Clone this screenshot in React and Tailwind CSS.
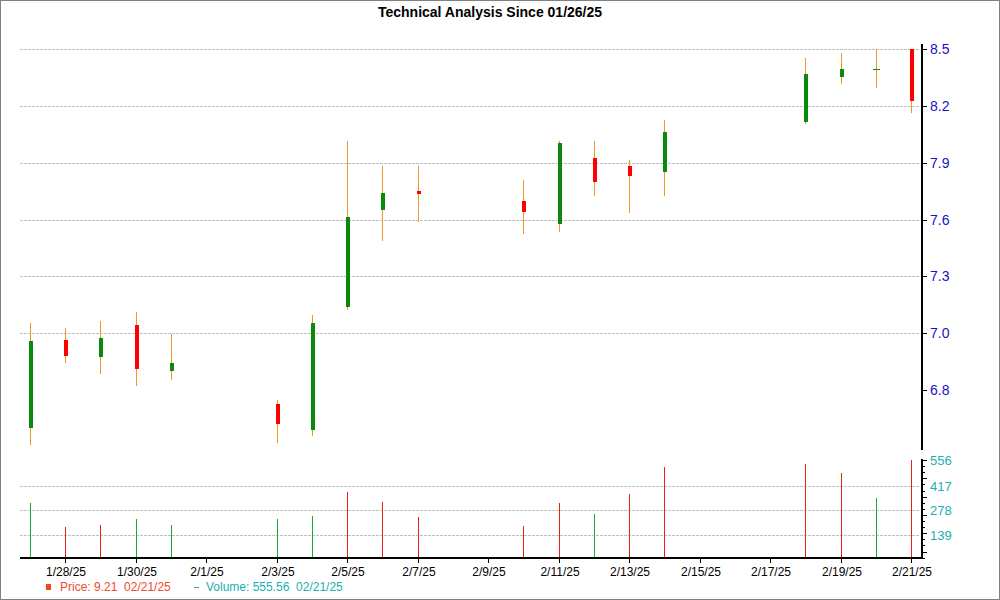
const C=[[30,323,445,341,428,'g'],[65,328,363,340,356,'r'],[100,321,374,338,357,'g'],[136,312,386,325,369,'r'],[171,334,380,363,371,'g'],[277,400,443,404,424,'r'],[312,315,436,323,430,'g'],[347,141,310,217,307,'g'],[382,166,241,193,210,'g'],[418,166,222,191,194,'r'],[523,180,234,201,212,'r'],[559,141,232,143,224,'g'],[594,141,196,158,182,'r'],[629,160,213,166,176,'r'],[664,120,196,132,172,'g'],[805,58,124,74,122,'g'],[841,53,84,69,77,'g'],[876,49,88,69,69,'d'],[911,49,113,49,101,'r']];
const V=[[30,503,'g'],[65,527,'r'],[100,525,'r'],[136,519,'g'],[171,525,'g'],[277,519,'g'],[312,516,'g'],[347,492,'r'],[382,502,'r'],[418,517,'r'],[523,526,'r'],[559,503,'r'],[594,514,'g'],[629,494,'r'],[664,467,'r'],[805,464,'r'],[841,473,'r'],[876,498,'g'],[911,460,'r']];
const D=['1/28/25','1/30/25','2/1/25','2/3/25','2/5/25','2/7/25','2/9/25','2/11/25','2/13/25','2/15/25','2/17/25','2/19/25','2/21/25'];
const PL=[[49,'8.5'],[106,'8.2'],[163,'7.9'],[220,'7.6'],[276,'7.3'],[333,'7.0'],[390,'6.8']];
const VL=[[460,'556'],[486,'417'],[510,'278'],[535,'139']];
export default function App(){
return(<div className="relative w-[1000px] h-[600px] bg-white border border-[#808080] overflow-hidden" style={{fontFamily:'"Liberation Sans",Arial,sans-serif'}}>
<div className="absolute left-0 right-[20px] top-[1px] text-center text-[14px] font-bold text-black">Technical Analysis Since 01/26/25</div>
<svg className="absolute left-[-1px] top-[-1px]" width="1000" height="600" fontFamily='"Liberation Sans",Arial,sans-serif' shapeRendering="crispEdges">
{PL.slice(0,6).map(([y])=><line key={y} x1="20" x2="919" y1={y+0.5} y2={y+0.5} stroke="#c0c0c0" strokeDasharray="3 1" strokeWidth="1"/>)}
{VL.slice(1).map(([y])=><line key={y} x1="20" x2="919" y1={y+0.5} y2={y+0.5} stroke="#c0c0c0" strokeDasharray="3 1" strokeWidth="1"/>)}
{C.map(([x,h,l,o,c,t])=><g key={x}>
<line x1={x+0.5} x2={x+0.5} y1={h} y2={l} stroke="#f0962a" strokeWidth="1"/>
{t==='d'?<line x1={x-3} x2={x+4} y1={o+0.5} y2={o+0.5} stroke="#0a8a0a"/>:
<rect x={x-1} y={o} width="4" height={Math.max(c-o,3)} fill={t==='g'?'#0a8a0a':'#ff0000'}/>}
</g>)}
{V.map(([x,y,t])=><line key={x} x1={x+0.5} x2={x+0.5} y1={y} y2="557" stroke={t==='g'?'#19a83a':'#f02010'} strokeWidth="1"/>)}
<line x1="922" x2="922" y1="44" y2="450" stroke="#000" strokeWidth="2"/>
{PL.map(([y,s])=><g key={s}><line x1="922" x2="927" y1={y+0.5} y2={y+0.5} stroke="#000"/><text x="930" y={y+5} fontSize="14" fill="#1a10c8">{s}</text></g>)}
<line x1="922" x2="922" y1="459" y2="558" stroke="#000" strokeWidth="2"/>
<line x1="20" x2="922" y1="558" y2="558" stroke="#000" strokeWidth="2"/>
{Array.from({length:17}).map((_,i)=><line key={i} x1="922" x2={i%3===0?927:925} y1={Math.round(460+i*6.1)+0.5} y2={Math.round(460+i*6.1)+0.5} stroke="#000"/>)}
{VL.map(([y,s])=><text key={s} x="930" y={y+5} fontSize="13" fill="#20b0b0">{s}</text>)}
{D.map((d,i)=>{const x=Math.round(65+i*70.5);return <g key={d}><line x1={x+0.5} x2={x+0.5} y1="557" y2="563" stroke="#000"/><text x={x+1} y="576" fontSize="12" textAnchor="middle" fill="#000">{d}</text></g>})}
<rect x="46" y="584" width="5" height="6" fill="#f04a10"/>
<text x="60" y="591" fontSize="12" fill="#f04a30">{'Price: 9.21\u00a0\u00a002/21/25'}</text>
<line x1="194" x2="199" y1="587.5" y2="587.5" stroke="#20b0b0"/>
<text x="206" y="591" fontSize="12" fill="#20b0b0">{'Volume: 555.56\u00a0\u00a002/21/25'}</text>
</svg></div>);}
